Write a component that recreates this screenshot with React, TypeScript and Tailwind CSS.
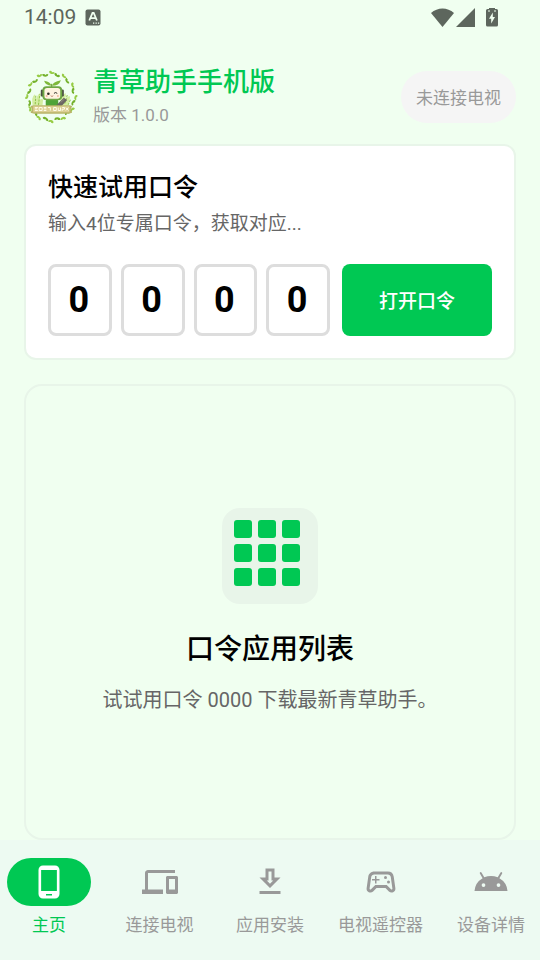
import React, { useState } from "react";
import clsx from "clsx";
import {
  MdAndroid,
  MdOutlineDevices,
  MdOutlineGetApp,
  MdOutlineSportsEsports,
  MdPhoneAndroid,
} from "react-icons/md";

const tabs = [
  { id: "home", label: "主页", icon: MdPhoneAndroid },
  { id: "connect", label: "连接电视", icon: MdOutlineDevices },
  { id: "install", label: "应用安装", icon: MdOutlineGetApp },
  { id: "remote", label: "电视遥控器", icon: MdOutlineSportsEsports },
  { id: "device", label: "设备详情", icon: MdAndroid },
];

function StatusBar() {
  return (
    <div className="flex items-center justify-between h-9 pl-6 pr-10 pb-[2px] text-[#5d665d]">
      <div className="flex items-center gap-2">
        <span className="text-[21px] leading-8">14:09</span>
        <svg viewBox="0 0 16 17" className="w-[17px] h-[17px]">
          <rect x="1" y="0.5" width="15" height="16" rx="2" fill="currentColor" />
          <path
            d="M4.8 11.5 8 4h1.2l3.2 7.5M6 9.2h5.2"
            fill="none"
            stroke="#f0fff0"
            strokeWidth="1.8"
          />
          <path d="M8.5 13.5h1.3v1.3H8.500zM11 13.5h1.3v1.3H11zM13.4 13.5h1.3v1.3h-1.3z" fill="#f0fff0" />
        </svg>
      </div>
      <svg viewBox="0 0 70 22" className="w-[70px] h-[22px]" fill="currentColor">
        <path d="M1 7C7.500 1 17.500 1 24 7L12.500 21z" />
        <path d="M45 2v19H26z" />
        <path d="M59 2h6v1h1.500q1.500 0 1.500 1.500v14.500q0 1.500-1.500 1.500h-9q-1.500 0-1.500-1.500V4.500Q56 3 57.500 3H59z" />
        <path d="M62.800 6.500v4.500H65l-3.800 6.500v-4.800h-2.200z" fill="#f0fff0" />
        <path d="M58 4.500h2v1h-2zM64 4.500h2v1h-2z" fill="#f0fff0" />
      </svg>
    </div>
  );
}

function Logo() {
  const leaves = Array.from({ length: 24 }, (_, i) => (i * 360) / 24);

  return (
    <svg viewBox="24 24 164 164" className="w-[54px] h-[54px] shrink-0" aria-hidden="true">
      {leaves.map((angle, i) => (
        <g key={angle} transform={`rotate(${angle} 107 106)`}>
          <path
            d={
              i % 2
                ? "M106 42q-10-3-8-10 8-1 9 5 6-4 9 1-2 6-10 4z"
                : "M107 36q-8-2-6-9 7-2 8 4 5-3 8 1-2 6-10 4z"
            }
            fill={i % 2 ? "#74b12c" : "#97cc45"}
          />
        </g>
      ))}
      {/* grass on both sides */}
      <path d="M50 130q-4-22 6-32 4 8 4 16 6-18 14-20 2 12-4 22 8-6 12-2l-2 18z" fill="#d3eda0" />
      <path d="M132 130q4-28 18-36 4 10-2 20 10-12 16-10 0 16-8 28z" fill="#d3eda0" />
      <path
        d="M58 128l2-26M68 130l4-32M148 126l8-28M158 130l8-18"
        stroke="#8fc248"
        strokeWidth="3"
        strokeDasharray="7 3"
      />
      {/* sprout */}
      <path d="M107 72q-2-12-22-15 4 14 22 15zM109 72q2-12 27-17-5 17-27 17z" fill="#7fb83a" />
      <path d="M108 78V66" stroke="#5d9626" strokeWidth="3" />
      {/* robot */}
      <rect x="90" y="112" width="38" height="24" rx="8" fill="#4fa338" />
      <rect x="75" y="83" width="8" height="22" rx="4" fill="#4a4f42" />
      <rect x="137" y="83" width="8" height="22" rx="4" fill="#4a4f42" />
      <rect x="80" y="73" width="60" height="43" rx="12" fill="#6ea643" />
      <rect x="86" y="79" width="48" height="32" rx="8" fill="#fff3e0" />
      <circle cx="98" cy="96" r="4" fill="#2e2a22" />
      <path d="M115 95q5-5 10 0" fill="none" stroke="#2e2a22" strokeWidth="3" />
      <path d="M105 102q4 5 8 0" fill="none" stroke="#a4553c" strokeWidth="2" />
      <circle cx="93" cy="103" r="3" fill="#f4b59c" />
      <circle cx="127" cy="103" r="3" fill="#f4b59c" />
      <path d="M122 131l23-23 10 7-18 20z" fill="#6b6663" />
      <path d="M136 122l10-9" stroke="#b3aaa2" strokeWidth="3" strokeDasharray="2 2" />
      {/* banner */}
      <path d="M44 133l8-2h110l8 2-4 11 4 10-11 3H55l-11-3 4-10z" fill="#b9b468" />
      <path d="M52 134h110v18H52z" fill="#dccf93" />
      <path
        d="M57 138h9M57 142h7M57 147h9M70 138h9v9h-9zM84 138h8M84 142h8M84 147h8M97 138h7v9M114 138v9h8v-9zM128 138v9h7v-9M140 138h7v5h-7v5M151 138l8 9M159 138l-8 9"
        fill="none"
        stroke="#fffdec"
        strokeWidth="3"
      />
    </svg>
  );
}

function Header() {
  return (
    <header className="flex items-center px-6 pt-7 pb-[14px]">
      <Logo />
      <div className="flex-1 ml-[15px]">
        <h1 className="text-[26px] leading-9 font-medium text-[#00c853]">
          青草助手手机版
        </h1>
        <p className="text-[17px] leading-[30px] text-[#999999]">版本 1.0.0</p>
      </div>
      <button
        type="button"
        className="h-[52px] px-[15px] pt-1 rounded-full bg-[#f5f5f5] text-[17px] text-[#999999]"
      >
        未连接电视
      </button>
    </header>
  );
}

function CodeCard() {
  const [code, setCode] = useState(["", "", "", ""]);

  const handleChange = (index: number, value: string) => {
    setCode(code.map((c, i) => (i === index ? value.slice(-1) : c)));
  };

  return (
    <section className="p-[22px] bg-white border-2 border-[#e8f5e9] rounded-xl">
      <h2 className="text-[25px] leading-10 font-medium text-black">快速试用口令</h2>
      <p className="text-[19px] leading-8 text-[#666666]">
        输入4位专属口令，获取对应...
      </p>
      <form className="flex gap-3 mt-6" onSubmit={(e) => e.preventDefault()}>
        <div className="grid flex-1 grid-cols-4 gap-[9px]">
          {code.map((digit, index) => (
            <input
              key={index}
              type="text"
              inputMode="numeric"
              aria-label={`口令 ${index + 1}`}
              placeholder="0"
              value={digit}
              onChange={(e) => handleChange(index, e.target.value)}
              className="w-full min-w-0 h-[72px] pr-[2px] text-center text-[36px] font-bold text-black placeholder:text-black bg-white border-3 border-[#dddddd] rounded-lg outline-none"
            />
          ))}
        </div>
        <button
          type="submit"
          className="w-[150px] h-[72px] pt-1 rounded-lg bg-[#00c853] text-[19px] font-medium text-white"
        >
          打开口令
        </button>
      </form>
    </section>
  );
}

function AppListCard() {
  return (
    <section className="flex flex-col items-center justify-center flex-1 px-6 py-12 border-2 border-[#e8f5e9] rounded-[18px]">
      <div className="grid content-start w-24 h-24 grid-cols-[18px_18px_18px] gap-[6px] p-3 rounded-[18px] bg-[#e8f5e9]">
        {Array.from({ length: 9 }, (_, i) => (
          <div key={i} className="h-[18px] rounded-[3px] bg-[#00c853]" />
        ))}
      </div>
      <h2 className="mt-6 text-[28px] leading-11 font-medium text-black">
        口令应用列表
      </h2>
      <p className="mt-3 text-[20px] leading-8 text-[#666666]">
        试试用口令 0000 下载最新青草助手。
      </p>
    </section>
  );
}

function TabBar() {
  const [active, setActive] = useState("home");

  return (
    <nav className="flex items-start justify-between h-[120px] px-[7px] pt-[18px] bg-[#edfaf2]">
      {tabs.map(({ id, label, icon: Icon }) => (
        <button
          key={id}
          type="button"
          onClick={() => setActive(id)}
          className={clsx(
            "flex flex-col items-center w-[84px]",
            active === id ? "text-[#00c853]" : "text-[#999999]"
          )}
        >
          <span
            className={clsx(
              "flex items-center justify-center w-full h-12 rounded-full",
              active === id && "bg-[#00c853] text-white"
            )}
          >
            <Icon className="w-9 h-9" />
          </span>
          <span className="mt-1 text-[17px] leading-[30px] whitespace-nowrap">{label}</span>
        </button>
      ))}
    </nav>
  );
}

export default function App() {
  return (
    <div className="flex flex-col min-h-screen bg-[#f0fff0] font-[Roboto,'Noto_Sans_CJK_SC',sans-serif]">
      <StatusBar />
      <Header />
      <main className="flex flex-col flex-1 gap-6 px-6">
        <CodeCard />
        <AppListCard />
      </main>
      <TabBar />
    </div>
  );
}
